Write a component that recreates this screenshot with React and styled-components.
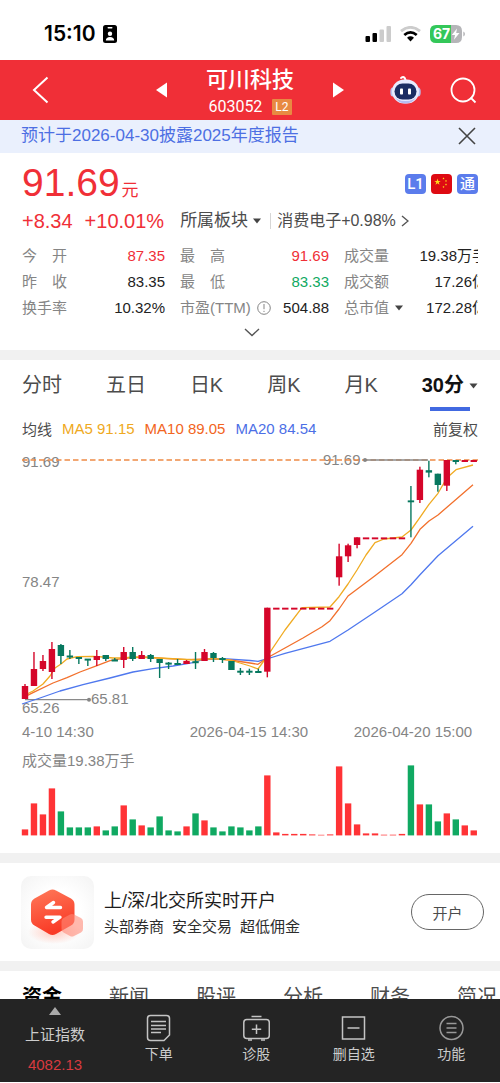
import React from "react";
import styled, { createGlobalStyle, css } from "styled-components";

const color = {
  red: "#f02f37",
  green: "#10a962",
  blue: "#4169e1",
  text: "#222222",
  soft: "#4c4c4c",
  muted: "#858585",
  band: "#f1f1f1",
};

const GlobalStyle = createGlobalStyle`
  * { box-sizing: border-box; }
  body {
    margin: 0;
    background: #ffffff;
    color: ${color.text};
    font-family: "Liberation Sans", "Noto Sans CJK SC", sans-serif;
  }
  button {
    padding: 0;
    border: 0;
    background: none;
    color: inherit;
    font: inherit;
    cursor: pointer;
  }
  svg { display: block; flex: none; }
`;

const Screen = styled.div`
  display: flex;
  flex-direction: column;
  height: 100vh;
  overflow: hidden;
`;

const StatusBar = styled.div`
  display: flex;
  flex: none;
  align-items: center;
  justify-content: space-between;
  height: 60px;
  padding: 7px 34px 0 44px;
`;

const StatusGroup = styled.div`
  display: flex;
  align-items: center;
  gap: ${(p) => p.$gap}px;
`;

const Clock = styled.time`
  color: #000000;
  font: 600 21px/24px Inter, sans-serif;
`;

const Header = styled.header`
  display: grid;
  flex: none;
  grid-template-columns: 1fr auto 1fr;
  align-items: center;
  height: 60px;
  background: ${color.red};
  color: #ffffff;
`;

const HeaderSide = styled.div`
  display: flex;
  align-items: center;
  justify-content: ${(p) => (p.$end ? "flex-end" : "flex-start")};
  gap: 29px;
  padding: 0 23px 0 32px;
`;

const StockSwitch = styled.div`
  display: flex;
  align-items: center;
  justify-content: space-between;
  width: 188px;
`;

const StockTitle = styled.div`
  display: flex;
  flex-direction: column;
  align-items: center;
  padding-top: 3px;
`;

const StockName = styled.h1`
  margin: 0;
  font-size: 22px;
  font-weight: 500;
  line-height: 30px;
`;

const StockCode = styled.div`
  display: flex;
  align-items: center;
  gap: 10px;
  font: 400 16px/24px Roboto, sans-serif;
`;

const LevelTag = styled.span`
  padding: 0 3px;
  border-radius: 1px;
  background: #e88a42;
  font-size: 12px;
  line-height: 16px;
`;

const Notice = styled.div`
  display: flex;
  align-items: center;
  justify-content: space-between;
  height: 33px;
  padding: 0 24px 2px 21px;
  background: #eaf0fd;
`;

const NoticeLink = styled.a`
  color: #4d6fe3;
  font-size: 17px;
  line-height: 24px;
  text-decoration: none;
`;

const Content = styled.main`
  flex: 1;
  min-height: 0;
  overflow: auto;
  scrollbar-width: none;
`;

const Band = styled.div`
  height: 10px;
  background: ${color.band};
`;

const Quote = styled.section`
  padding: 7px 22px 6px;
`;

const PriceRow = styled.div`
  display: flex;
  align-items: center;
  justify-content: space-between;
  height: 48px;
`;

const Price = styled.div`
  padding-top: 6px;
  color: ${color.red};
  font-size: 39px;
  line-height: 48px;
`;

const Unit = styled.span`
  margin-left: 2px;
  font-size: 17px;
`;

const Badges = styled.div`
  display: flex;
  gap: 5px;
`;

const Badge = styled.span`
  display: flex;
  align-items: center;
  justify-content: center;
  width: 21px;
  height: 20px;
  border-radius: 4px;
  background: ${(p) => p.$bg || "#5b7cec"};
  color: #ffffff;
  font: 500 15px/20px Roboto, "Noto Sans CJK SC", sans-serif;
`;

const ChangeRow = styled.div`
  display: flex;
  align-items: center;
  height: 26px;
`;

const Change = styled.span`
  margin-right: ${(p) => p.$after}px;
  color: ${color.red};
  font-size: 20px;
`;

const SectorButton = styled.button`
  display: flex;
  align-items: center;
  gap: 5px;
  color: ${color.soft};
  font-size: ${(p) => p.$size}px;
  line-height: 26px;
`;

const Rule = styled.span`
  width: 1px;
  height: 16px;
  margin: 0 6px 0 9px;
  background: #d6d6d6;
`;

const StatsClip = styled.div`
  margin-top: 9px;
  overflow: hidden;
`;

const Stats = styled.dl`
  display: grid;
  grid-template-columns: 143fr 149fr 143fr;
  column-gap: 15px;
  width: calc(100% + 9px);
  margin: 0;
`;

const Stat = styled.div`
  display: flex;
  justify-content: space-between;
  font-size: 15px;
  line-height: 26px;
  white-space: nowrap;
`;

const StatLabel = styled.dt`
  display: flex;
  align-items: center;
  gap: 6px;
  color: ${color.muted};
`;

const StatValue = styled.dd`
  margin: 0;
  color: ${(p) => p.$color || color.text};
`;

const ExpandButton = styled.button`
  display: flex;
  align-items: center;
  justify-content: center;
  width: 100%;
  height: 23px;
  padding-left: 4px;
`;

const ChartSection = styled.section`
  padding: 0 22px 17px;
`;

const PeriodTabs = styled.nav`
  display: flex;
  justify-content: space-between;
`;

const PeriodTab = styled.button`
  position: relative;
  display: flex;
  align-items: center;
  gap: 5px;
  height: 51px;
  color: ${color.soft};
  font-size: 20px;
  line-height: 51px;
  ${(p) =>
    p.$active &&
    css`
      color: #111111;
      font-weight: 700;
      &::after {
        content: "";
        position: absolute;
        right: 8px;
        bottom: 0;
        left: 8px;
        height: 4px;
        background: ${color.blue};
      }
    `}
`;

const Averages = styled.div`
  display: flex;
  align-items: center;
  gap: 10px;
  height: 34px;
  margin-bottom: 5px;
  font-size: 15px;
`;

const Average = styled.span`
  color: ${(p) => p.$color || color.soft};
`;

const AdjustButton = styled.button`
  margin-left: auto;
  color: ${color.soft};
  font-size: 15px;
`;

const ChartSvg = styled.svg`
  width: 100%;
  height: auto;
  overflow: visible;
  text {
    fill: ${color.muted};
    font-size: 15px;
  }
`;

const Promo = styled.section`
  display: flex;
  align-items: center;
  gap: 10px;
  height: 98px;
  padding: 0 16px 0 21px;
`;

const PromoIcon = styled.div`
  flex: none;
  width: 73px;
  height: 73px;
  border-radius: 10px;
  background: radial-gradient(circle, #ffffff 45%, #f3f3f3 100%);
`;

const PromoText = styled.div`
  flex: 1;
  padding-top: 3px;
`;

const PromoTitle = styled.h2`
  margin: 0;
  color: #1c1c1c;
  font-size: 18px;
  font-weight: 400;
  line-height: 26px;
`;

const PromoPoints = styled.div`
  display: flex;
  gap: 8px;
  color: #2c2c2c;
  font-size: 15px;
  line-height: 26px;
`;

const OpenButton = styled.button`
  width: 73px;
  height: 36px;
  border: 1px solid #666666;
  border-radius: 18px;
  color: ${color.soft};
  font-size: 15px;
`;

const InfoTabs = styled.nav`
  display: flex;
  gap: 47px;
  padding: 0 22px;
  overflow: hidden;
`;

const InfoTab = styled.button`
  flex: none;
  color: ${(p) => (p.$active ? "#000000" : color.soft)};
  font-size: 20px;
  font-weight: ${(p) => (p.$active ? 700 : 400)};
  line-height: 52px;
`;

const BottomBar = styled.nav`
  display: flex;
  flex: none;
  height: 83px;
  margin-bottom: 1px;
  background: #242424;
  color: #cccccc;
`;

const IndexButton = styled.button`
  display: flex;
  flex-direction: column;
  align-items: center;
  width: 110px;
  padding-top: 8px;
  font-size: 15px;
  line-height: 30px;
`;

const IndexName = styled.span`
  padding-top: 5px;
`;

const IndexValue = styled.span`
  color: #d83a3f;
`;

const BarButton = styled.button`
  display: flex;
  flex: 1;
  flex-direction: column;
  align-items: center;
  gap: 1px;
  padding-top: 15px;
  font-size: 14px;
  line-height: 22px;
`;

const Caret = ({ size = 8, fill = "#444444" }) => (
  <svg width={size} height="6" viewBox="0 0 8 6">
    <path d="M0 0.5H8L4 5.5Z" fill={fill} />
  </svg>
);

// Each candle: body top, body bottom, high, low, rising flag.
const candles = [
  [236, 249, 234, 249, 1], [219, 236, 202, 236, 1], [211, 219, 205, 221, 1],
  [199, 222, 192, 229, 1], [195, 206, 194, 214, 0], [205.5, 207.5, 200, 209, 0],
  [207, 209, 207, 214, 0], [208.6, 210.6, 209, 216, 0], [206, 210, 200, 216, 1],
  [205, 209, 205, 211, 0], [209.5, 211.5, 208, 211, 0], [202, 210, 197, 218, 1],
  [202, 209, 197, 211, 0], [205, 209, 201, 209, 1], [205, 209, 204, 212, 0],
  [209, 213, 209, 228, 0], [212.6, 214.6, 212, 219, 0], [213, 215, 209, 214, 0],
  [211, 214, 210, 214, 1], [211.2, 213.2, 202, 219, 0], [202, 211, 199, 211, 1],
  [203, 208, 202, 212, 0], [208, 210, 207, 213, 0], [211, 220, 211, 220, 0],
  [220.7, 222.7, 218, 225, 0], [220.7, 222.7, 218.7, 225, 0], [221, 223, 218.7, 222, 0],
  [157.7, 221.7, 157.7, 227.3, 1],
  ...Array.from({ length: 7 }, () => [157.7, 159.6, 158, 159, 1]),
  [106.3, 127.3, 93.7, 135.7, 1], [95.3, 106.3, 93.7, 112, 1], [87.3, 95, 87.3, 98.3, 1],
  ...Array.from({ length: 5 }, () => [87.4, 89.3, 88, 89, 1]),
  [50.4, 52.3, 36, 87.3, 0], [19.7, 50, 16.7, 53, 1], [20.2, 22.6, 10.7, 27.3, 0],
  [23.7, 35, 23.7, 41.7, 0], [10, 35.7, 10, 41, 1], [10, 12, 10.3, 14.3, 0],
  [10, 12, 10.3, 11.8, 1], [10, 12, 10.3, 11.8, 1],
];

const volumes = [
  6, 32, 21, 47, 24, 8, 8, 8, 9, 5, 9, 30, 16, 10, 8, 19, 5, 4, 9, 22, 15, 8, 4, 9, 8, 5, 9,
  60, 3, 1.5, 1.5, 1.5, 1, 0.6, 1, 69, 32, 11, 2, 2, 0.7, 0.7, 1.5, 70, 31, 31, 14, 22, 16,
  10, 5,
];

const averageLines = [
  {
    stroke: "#4f78ee",
    points:
      "0,254 18,248 38,241 61,234.7 88,228 111,222 131,218.7 151,216 171,212.7 181,209.5 205,208.8 228,210.5 236,211.3 248,208 263,203.3 308,191.3 326,180 353,162 380,143.7 389,134.7 398,124.7 416,105.7 451,76.3",
  },
  {
    stroke: "#f2702c",
    points:
      "3,246.7 11,242.7 31,233 45,227.7 58,222 75,215.7 88,210.7 101,208.3 121,207 145,208.7 165,209.7 191,208.7 208,210 228,213 236,214.3 245,208 263,198 281,188 300,176.7 308,170.7 317,159 326,146 353,125.7 380,104.7 389,93.3 398,79.3 407,71 416,65 451,34.7",
  },
  {
    stroke: "#f0ab22",
    points:
      "3,245 11,241 21,234 28,226 33,218 39,214 45,209 55,206.7 71,206.3 81,207 91,208 101,208 111,207 125,207.5 138,208 155,209 175,210 191,208.7 208,210 218,213 228,216 236,219 245,206.7 263,180 280,157.7 308,157 317,146.7 326,134 335,120 344,105 353,92.7 362,89 380,87 389,80 398,67.3 407,54.3 416,43.3 425,27.7 434,19.7 451,15",
  },
];

const slotX = (i) => 3 + i * 8.975;

const PriceChart = () => (
  <ChartSvg viewBox="0 0 456 296" role="img" aria-label="30分K线">
    <text x="0" y="17">91.69</text>
    <text x="0" y="137">78.47</text>
    <text x="0" y="263">65.26</text>
    <text x="301" y="15">91.69</text>
    <path d="M0 10H456" stroke="#ee8a45" strokeWidth="1.6" strokeDasharray="5.5 3" />
    <path d="M343 10H406M3 249.7H67" stroke="#8a8a8a" strokeWidth="1.3" />
    <circle cx="343" cy="10" r="2" fill="#858585" />
    <circle cx="67" cy="249.7" r="2" fill="#858585" />
    <text x="69" y="254">65.81</text>
    {averageLines.map((line) => (
      <polyline key={line.stroke} points={line.points} fill="none" stroke={line.stroke} strokeWidth="1.3" strokeLinejoin="round" />
    ))}
    {candles.map(([top, bottom, high, low, up], i) => (
      <g key={i} fill={up ? "#d5062a" : "#07785f"}>
        <rect x={slotX(i) - 3.2} y={top} width="6.4" height={bottom - top} />
        <rect x={slotX(i) - 0.7} y={high} width="1.4" height={low - high} />
      </g>
    ))}
    <text x="0" y="287">4-10 14:30</text>
    <text x="227" y="287" textAnchor="middle">2026-04-15 14:30</text>
    <text x="391" y="287" textAnchor="middle">2026-04-20 15:00</text>
  </ChartSvg>
);

const VolumeChart = () => (
  <ChartSvg viewBox="0 0 456 90" role="img" aria-label="成交量">
    <text x="0" y="20">成交量19.38万手</text>
    {volumes.map((height, i) => (
      <rect
        key={i}
        x={slotX(i) - 3.2}
        y={89.4 - height}
        width="6.4"
        height={height}
        fill={candles[i][4] ? "#ff3336" : color.green}
      />
    ))}
  </ChartSvg>
);

const stats = [
  { label: "今　开", value: "87.35", tone: color.red },
  { label: "最　高", value: "91.69", tone: color.red },
  { label: "成交量", value: "19.38万手" },
  { label: "昨　收", value: "83.35" },
  { label: "最　低", value: "83.33", tone: color.green },
  { label: "成交额", value: "17.26亿" },
  { label: "换手率", value: "10.32%" },
  { label: "市盈(TTM)", value: "504.88", info: true },
  { label: "总市值", value: "172.28亿", caret: true },
];

const star = "M0 -4L0.95 -1.3H3.8L1.5 0.4L2.35 3.2L0 1.5L-2.35 3.2L-1.5 0.4L-3.8 -1.3H-0.95Z";

const barItems = [
  {
    label: "下单",
    icon: (
      <>
        <path d="M5.5 1.5H21.5Q24.5 1.5 24.5 4.5V21L19 26.5H5.5Q2.5 26.5 2.5 23.5V4.5Q2.5 1.5 5.5 1.5Z" />
        <path d="M6 7.5H21M6 11.5H21M6 15H21M6 18.5H16" />
      </>
    ),
  },
  {
    label: "诊股",
    icon: (
      <>
        <rect x="0.8" y="5.5" width="25.5" height="19" rx="3" />
        <path d="M8.5 2.5H18.5M5 26H9M18 26H22M13.5 10.5V20M8.8 15.2H18.2" />
      </>
    ),
  },
  {
    label: "删自选",
    icon: (
      <>
        <rect x="2.5" y="3" width="22" height="22" />
        <path d="M7.5 14H19.5" />
      </>
    ),
  },
  {
    label: "功能",
    dim: true,
    icon: (
      <>
        <circle cx="13.5" cy="14" r="11.5" />
        <path d="M8.5 9.5H18.5M8.5 14H18.5M8.5 18.5H18.5" />
      </>
    ),
  },
];

export default function App() {
  return (
    <>
      <GlobalStyle />
      <Screen>
        <StatusBar>
          <StatusGroup $gap={7}>
            <Clock>15:10</Clock>
            <svg width="14" height="18" viewBox="0 0 14 18">
              <rect width="14" height="18" rx="2.5" fill="#000" />
              <rect x="4.5" y="2" width="5" height="1.5" rx="0.7" fill="#fff" />
              <circle cx="7" cy="8.8" r="2.2" fill="#fff" />
              <path d="M2.8 15.5Q3 12 7 12T11.2 15.5Z" fill="#fff" />
            </svg>
          </StatusGroup>
          <StatusGroup $gap={9}>
            <svg width="26" height="17" viewBox="0 0 26 17">
              <rect x="0.5" y="11" width="4.5" height="6" rx="1" />
              <rect x="7.5" y="8" width="4.5" height="9" rx="1" />
              <rect x="14.5" y="4.5" width="4.5" height="12.5" rx="1" fill="#cccccc" />
              <rect x="21.5" y="1" width="4.5" height="16" rx="1" fill="#cccccc" />
            </svg>
            <svg width="21" height="16" viewBox="0 0 21 16" fill="none" strokeWidth="2.8">
              <path d="M1 5.2Q10.5 -2.5 20 5.2" stroke="#cccccc" />
              <path d="M4.3 9Q10.5 3.8 16.7 9" stroke="#000" />
              <path d="M7 11.7Q10.5 8.8 14 11.7L10.5 15.5Z" fill="#000" />
            </svg>
            <svg width="36" height="18" viewBox="0 0 36 18">
              <path d="M6 0H21V18H6Q0 18 0 12V6Q0 0 6 0Z" fill="#34c759" />
              <path d="M21 0H26Q32 0 32 6V12Q32 18 26 18H21Z" fill="#b5b5b8" />
              <path d="M33.3 6.5Q35 7.2 35 9T33.3 11.5Z" fill="#b5b5b8" />
              <text x="3" y="14" fill="#fff" fontFamily="Inter, sans-serif" fontSize="14" fontWeight="700">67</text>
              <path d="M27 3.5L21.8 10H25L24 14.8L29.5 8H26.2Z" fill="#fff" />
            </svg>
          </StatusGroup>
        </StatusBar>

        <Header>
          <HeaderSide>
            <button type="button" aria-label="返回">
              <svg width="17" height="28" viewBox="0 0 17 28" fill="none" stroke="#fff" strokeWidth="2">
                <path d="M15.5 1.5L2 14L15.5 26.5" />
              </svg>
            </button>
          </HeaderSide>
          <StockSwitch>
            <button type="button" aria-label="上一只">
              <svg width="11" height="16" viewBox="0 0 11 16"><path d="M11 0.5V15.5L0 8Z" fill="#fff" /></svg>
            </button>
            <StockTitle>
              <StockName>可川科技</StockName>
              <StockCode>
                603052
                <LevelTag>L2</LevelTag>
              </StockCode>
            </StockTitle>
            <button type="button" aria-label="下一只">
              <svg width="11" height="16" viewBox="0 0 11 16"><path d="M0 0.5V15.5L11 8Z" fill="#fff" /></svg>
            </button>
          </StockSwitch>
          <HeaderSide $end>
            <button type="button" aria-label="智能助手">
              <svg width="31" height="30" viewBox="0 0 31 30">
                <path d="M11 3Q14.5 0.5 15.5 5" fill="none" stroke="#fff" strokeWidth="2" strokeLinecap="round" />
                <ellipse cx="2.8" cy="17" rx="2.5" ry="4.5" fill="#b9c2f2" />
                <ellipse cx="28.2" cy="17" rx="2.5" ry="4.5" fill="#b9c2f2" />
                <rect x="2" y="4.5" width="27" height="24" rx="12" fill="#e9ecff" />
                <path d="M4 21Q8 28.5 15.5 28.5T27 21Q24 26 15.5 26T4 21Z" fill="#b6bdf0" />
                <rect x="4.5" y="8.5" width="22" height="16" rx="8" fill="#1b2d63" />
                <rect x="10" y="13.5" width="3" height="6" rx="0.8" fill="#fff" />
                <rect x="18" y="13.5" width="3" height="6" rx="0.8" fill="#fff" />
              </svg>
            </button>
            <button type="button" aria-label="搜索">
              <svg width="27" height="28" viewBox="0 0 27 28" fill="none" stroke="#fff" strokeWidth="1.8">
                <circle cx="13" cy="14" r="11.5" />
                <path d="M20.5 21.5L25.5 26.5" />
              </svg>
            </button>
          </HeaderSide>
        </Header>

        <Content>
          <Notice>
            <NoticeLink href="#report">预计于2026-04-30披露2025年度报告</NoticeLink>
            <button type="button" aria-label="关闭">
              <svg width="18" height="18" viewBox="0 0 18 18" stroke="#444" strokeWidth="1.6">
                <path d="M1 1L17 17M17 1L1 17" />
              </svg>
            </button>
          </Notice>

          <Quote>
            <PriceRow>
              <Price>91.69<Unit>元</Unit></Price>
              <Badges>
                <Badge>L1</Badge>
                <Badge $bg="#de0a12">
                  <svg width="21" height="20" viewBox="0 0 21 20" fill="#ffd91a">
                    <path d={star} transform="translate(6.5 8) scale(0.85)" />
                    <path d={star} transform="translate(12.5 4.5) scale(0.3)" />
                    <path d={star} transform="translate(15 7) scale(0.3)" />
                    <path d={star} transform="translate(15 10.5) scale(0.3)" />
                    <path d={star} transform="translate(12.5 13) scale(0.3)" />
                  </svg>
                </Badge>
                <Badge>通</Badge>
              </Badges>
            </PriceRow>
            <ChangeRow>
              <Change $after={12}>+8.34</Change>
              <Change $after={16}>+10.01%</Change>
              <SectorButton type="button" $size={17}>所属板块<Caret /></SectorButton>
              <Rule />
              <SectorButton type="button" $size={16}>
                消费电子+0.98%
                <svg width="8" height="12" viewBox="0 0 8 12" fill="none" stroke="#555" strokeWidth="1.4">
                  <path d="M1 1L7 6L1 11" />
                </svg>
              </SectorButton>
            </ChangeRow>
            <StatsClip>
              <Stats>
                {stats.map((s) => (
                  <Stat key={s.label}>
                    <StatLabel>
                      {s.label}
                      {s.info && (
                        <svg width="14" height="14" viewBox="0 0 14 14" fill="none" stroke="#858585">
                          <circle cx="7" cy="7" r="6.3" />
                          <path d="M7 3V8.2M7 9.8V11" />
                        </svg>
                      )}
                      {s.caret && <Caret />}
                    </StatLabel>
                    <StatValue $color={s.tone}>{s.value}</StatValue>
                  </Stat>
                ))}
              </Stats>
            </StatsClip>
            <ExpandButton type="button" aria-label="展开">
              <svg width="16" height="9" viewBox="0 0 16 9" fill="none" stroke="#555" strokeWidth="1.4">
                <path d="M1 1L8 7.5L15 1" />
              </svg>
            </ExpandButton>
          </Quote>

          <Band />

          <ChartSection>
            <PeriodTabs>
              {["分时", "五日", "日K", "周K", "月K"].map((name) => (
                <PeriodTab key={name} type="button">{name}</PeriodTab>
              ))}
              <PeriodTab type="button" $active>30分<Caret size={9} /></PeriodTab>
            </PeriodTabs>
            <Averages>
              <Average>均线</Average>
              <Average $color="#efa922">MA5 91.15</Average>
              <Average $color="#f26522">MA10 89.05</Average>
              <Average $color="#4c6fe6">MA20 84.54</Average>
              <AdjustButton type="button">前复权</AdjustButton>
            </Averages>
            <PriceChart />
            <VolumeChart />
          </ChartSection>

          <Band />

          <Promo>
            <PromoIcon>
              <svg width="73" height="73" viewBox="0 0 73 73">
                <defs>
                  <linearGradient id="hex" x1="0" y1="0" x2="0.3" y2="1">
                    <stop offset="0" stopColor="#ff7a5a" />
                    <stop offset="1" stopColor="#f93a26" />
                  </linearGradient>
                  <radialGradient id="glow">
                    <stop offset="0" stopColor="#ffb3a3" stopOpacity="0.7" />
                    <stop offset="1" stopColor="#ffb3a3" stopOpacity="0" />
                  </radialGradient>
                </defs>
                <ellipse cx="33" cy="56" rx="26" ry="12" fill="url(#glow)" />
                <path d="M28 14.5Q31.5 12.5 35 14.5L50 22.5Q53.5 24.5 53.5 28.5V43.5Q53.5 47.5 50 49.5L35 58Q31.5 60 28 58L13.5 49.5Q10 47.5 10 43.5V28.5Q10 24.5 13.5 22.5Z" fill="url(#hex)" />
                <path d="M49 38.5Q51 37.5 53 38.5L60 42Q62 43 62 45.5V53Q62 55.5 60 56.5L53 60Q51 61 49 60L42.5 56.5Q40.5 55.5 40.5 53V45.5Q40.5 43 42.5 42Z" fill="#ff8a78" fillOpacity="0.6" />
                <path d="M32.5 26.5L25.5 31.5H39.5M25 41.2H39L32 46" fill="none" stroke="#fff" strokeWidth="3.4" strokeLinecap="round" strokeLinejoin="round" />
              </svg>
            </PromoIcon>
            <PromoText>
              <PromoTitle>上/深/北交所实时开户</PromoTitle>
              <PromoPoints>
                <span>头部券商</span>
                <span>安全交易</span>
                <span>超低佣金</span>
              </PromoPoints>
            </PromoText>
            <OpenButton type="button">开户</OpenButton>
          </Promo>

          <Band />

          <InfoTabs>
            {["资金", "新闻", "股评", "分析", "财务", "简况"].map((name, i) => (
              <InfoTab key={name} type="button" $active={i === 0}>{name}</InfoTab>
            ))}
          </InfoTabs>
        </Content>

        <BottomBar>
          <IndexButton type="button">
            <svg width="12" height="8" viewBox="0 0 12 8"><path d="M6 0L12 8H0Z" fill="#aaaaaa" /></svg>
            <IndexName>上证指数</IndexName>
            <IndexValue>4082.13</IndexValue>
          </IndexButton>
          {barItems.map((item) => (
            <BarButton key={item.label} type="button">
              <svg width="27" height="28" viewBox="0 0 27 28" fill="none" stroke={item.dim ? "#999999" : "#c4c4c4"} strokeWidth="1.5">
                {item.icon}
              </svg>
              <span>{item.label}</span>
            </BarButton>
          ))}
        </BottomBar>
      </Screen>
    </>
  );
}
